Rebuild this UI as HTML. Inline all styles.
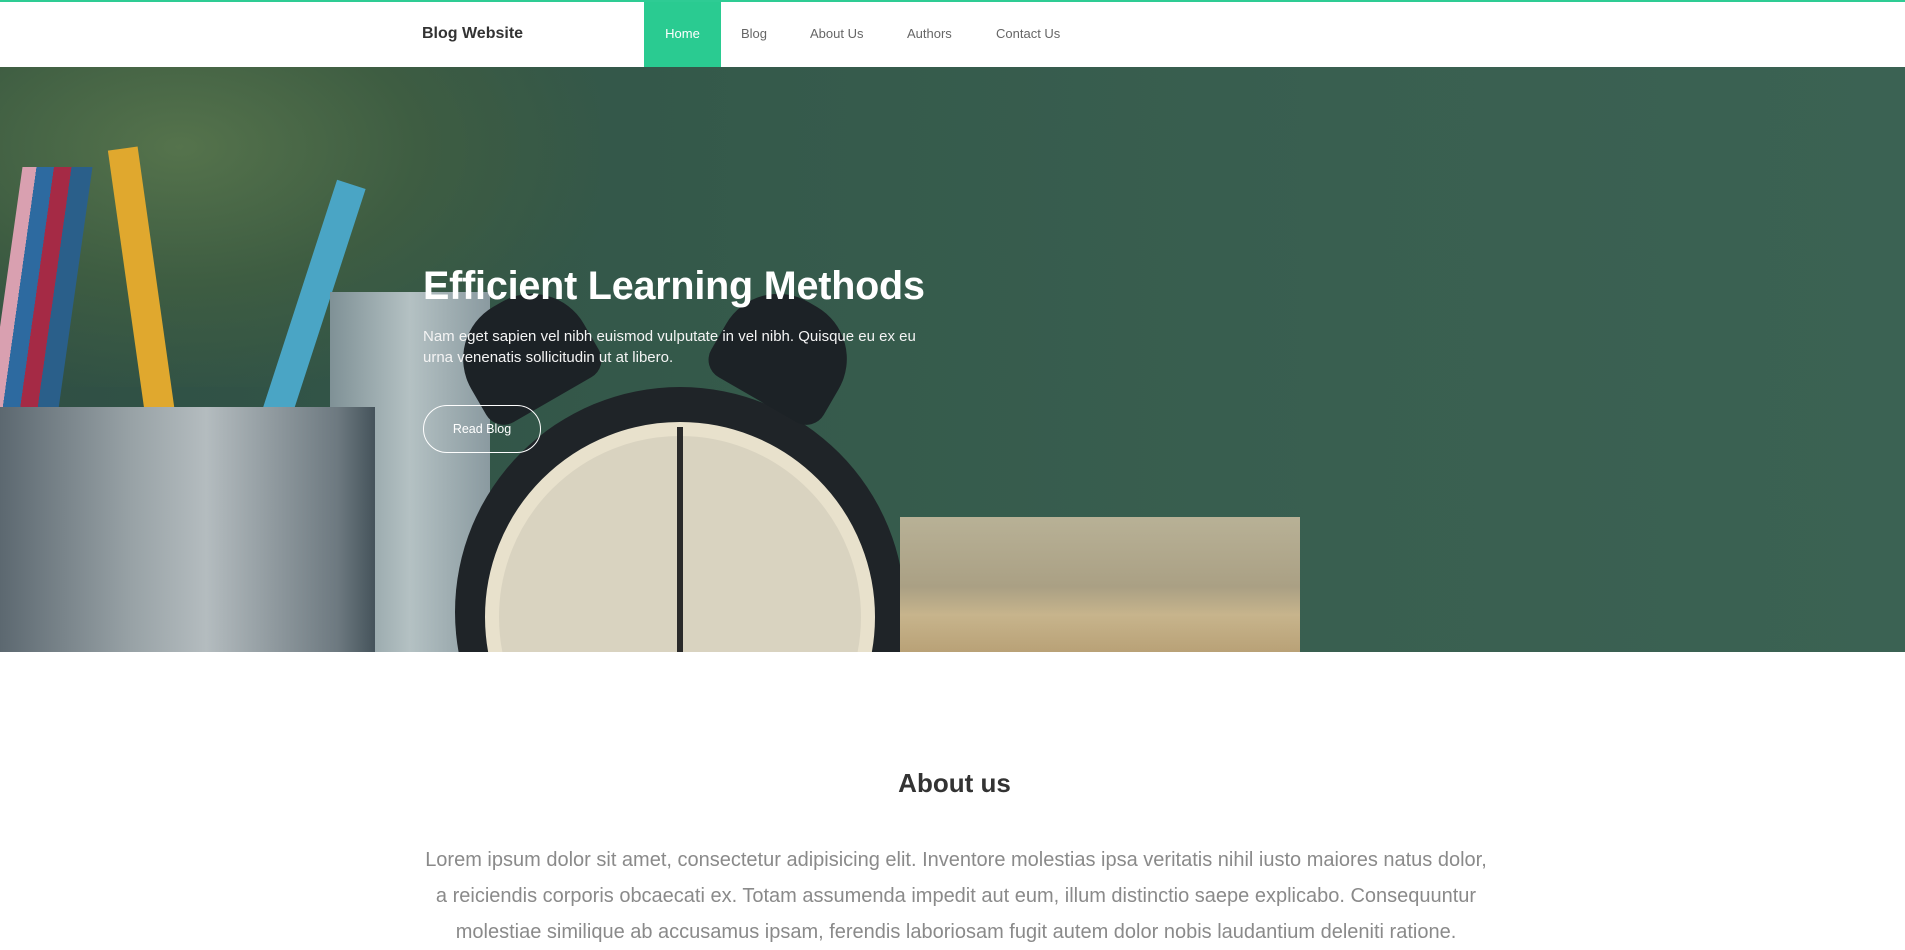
<!DOCTYPE html>
<html><head><meta charset="utf-8"><style>
*{margin:0;padding:0;box-sizing:border-box}
body{width:1905px;height:925px;overflow:hidden;background:#fff;font-family:"Liberation Sans",sans-serif}
.top{height:2px;background:#2ecc94}
header{height:65px;position:relative;background:#fff}
.brand{position:absolute;left:422px;top:23px;font-size:16px;color:#333;font-weight:600}
.nav a{position:absolute;top:0;height:65px;line-height:64px;font-size:13px;color:#666;text-decoration:none}
.nav .home{left:644px;width:77px;background:#2acb91;color:#fff;text-align:center}
.hero{position:absolute;top:67px;left:0;width:1905px;height:585px;overflow:hidden;background:linear-gradient(90deg,#2f4f44 0%,#355a4b 40%,#395f50 70%,#3b6253 100%)}
.hero div{position:absolute}
h1{position:absolute;left:423px;top:264px;font-size:39.5px;font-weight:600;color:#fff;white-space:nowrap;letter-spacing:-0.2px}
p.sub{position:absolute;left:423px;top:326px;width:520px;font-size:15px;line-height:21px;color:#f4f4f4}
.btn{position:absolute;left:423px;top:405px;width:118px;height:48px;border:1px solid #fff;border-radius:24px;color:#fff;font-size:12.5px;text-align:center;line-height:46px}
h2{position:absolute;top:768px;width:100%;left:0;text-align:center;font-size:26px;font-weight:600;color:#333;padding-left:4px}
.lorem{position:absolute;left:400px;top:842px;width:1112px;text-align:center;font-size:20px;line-height:36px;color:#8a8a8a;white-space:nowrap}
</style></head><body>
<div class="top"></div>
<header>
<div class="brand">Blog Website</div>
<div class="nav">
<a class="home">Home</a>
<a style="left:741px">Blog</a>
<a style="left:810px">About Us</a>
<a style="left:907px">Authors</a>
<a style="left:996px">Contact Us</a>
</div>
</header>
<div class="hero">
<div style="left:0;top:0;width:600px;height:320px;background:radial-gradient(ellipse at 30% 25%,#55734c 0%,#3e5d42 40%,rgba(50,80,65,0) 75%)"></div>
<div style="left:0;top:100px;width:70px;height:320px;background:linear-gradient(90deg,#d9a0b0 0 20%,#2d6aa0 20% 45%,#a52a45 45% 70%,#2a5f8a 70% 100%);transform:skewX(-8deg)"></div>
<div style="left:130px;top:80px;width:30px;height:320px;background:#e0a82e;transform:rotate(-8deg)"></div>
<div style="left:290px;top:110px;width:30px;height:300px;background:#4aa5c5;transform:rotate(18deg)"></div>
<div style="left:330px;top:225px;width:160px;height:360px;background:linear-gradient(90deg,#7f9196,#b4c1c3,#8a9aa0)"></div>
<div style="left:0;top:340px;width:375px;height:260px;background:linear-gradient(90deg,#5c6870,#98a2a6 35%,#b4bcbf 55%,#6d7980 90%,#45535b)"></div>
<div style="left:455px;top:320px;width:450px;height:450px;border-radius:50%;background:#1f2428"></div>
<div style="left:485px;top:355px;width:390px;height:390px;border-radius:50%;background:#d9d3c0;border:14px solid #e8e1cc"></div>
<div style="left:460px;top:230px;width:130px;height:110px;border-radius:60px 60px 20px 20px;background:#1c2226;transform:rotate(-30deg)"></div>
<div style="left:720px;top:230px;width:130px;height:110px;border-radius:60px 60px 20px 20px;background:#1c2226;transform:rotate(30deg)"></div>
<div style="left:677px;top:360px;width:6px;height:230px;background:#2a2a2a"></div>
<div style="left:900px;top:450px;width:400px;height:140px;background:linear-gradient(180deg,#b8b196,#aaa084 50%,#c7b48c 70%,#b79f74)"></div>
</div>
<h1>Efficient Learning Methods</h1>
<p class="sub">Nam eget sapien vel nibh euismod vulputate in vel nibh. Quisque eu ex eu urna venenatis sollicitudin ut at libero.</p>
<div class="btn">Read Blog</div>
<h2>About us</h2>
<div class="lorem">Lorem ipsum dolor sit amet, consectetur adipisicing elit. Inventore molestias ipsa veritatis nihil iusto maiores natus dolor,<br>a reiciendis corporis obcaecati ex. Totam assumenda impedit aut eum, illum distinctio saepe explicabo. Consequuntur<br>molestiae similique ab accusamus ipsam, ferendis laboriosam fugit autem dolor nobis laudantium deleniti ratione.</div>
</body></html>
